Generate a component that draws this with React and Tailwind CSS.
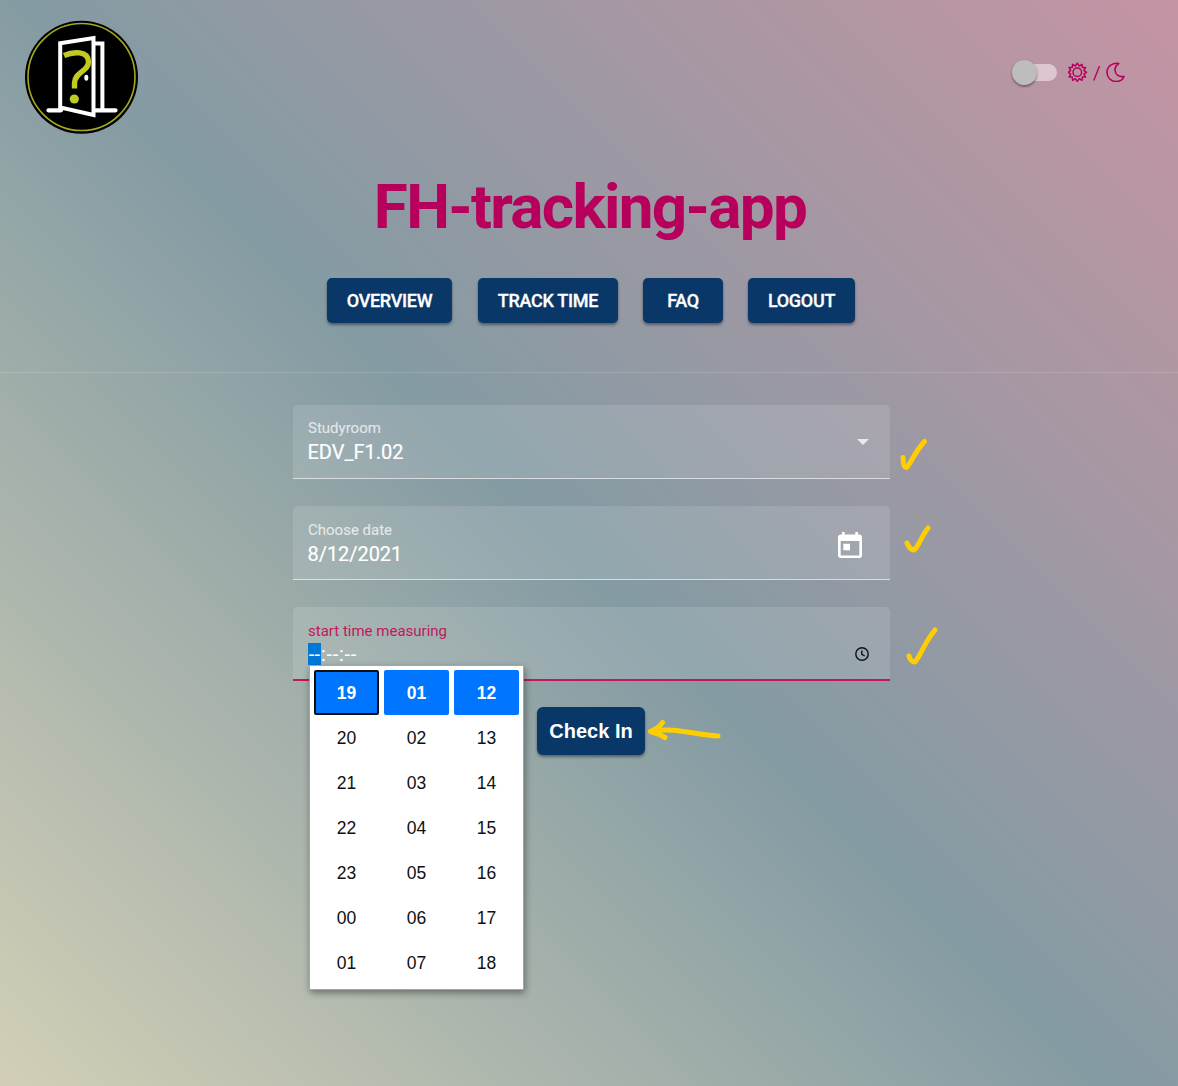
import React from 'react';

const HOURS = ['19', '20', '21', '22', '23', '00', '01'];
const MINUTES = ['01', '02', '03', '04', '05', '06', '07'];
const SECONDS = ['12', '13', '14', '15', '16', '17', '18'];

function Logo() {
  return (
    <svg viewBox="0 0 135 135" className="h-[135px] w-[135px]" fill="none">
      <circle cx="66.5" cy="67.2" r="56.5" fill="#000" />
      <circle cx="66.5" cy="67" r="53.5" stroke="#a3a91e" strokeWidth="1.6" />
      <path d="M33.500 100.3H46M80 100.300H100.500" stroke="#fff" strokeWidth="4.300" strokeLinecap="round" />
      <path d="M80 33.400h7.400V99" stroke="#fff" strokeWidth="4" />
      <path d="M45.200 33.200 78.500 28V105L45.200 97.500Z" stroke="#fff" strokeWidth="4" />
      <path d="M49 45.500C58 41.500 73.500 40.500 73.500 52c0 9.500-14 10-14 21v5.500" stroke="#bfca22" strokeWidth="5.400" />
      <circle cx="59.300" cy="89" r="4.600" fill="#bfca22" />
      <ellipse cx="71.300" cy="67.800" rx="2" ry="3" fill="#fff" />
    </svg>
  );
}

function ThemeSwitch() {
  return (
    <div className="flex h-7 items-center text-[#b6005e]">
      <div className="relative mr-[11px] flex h-[25px] w-[45px] items-center">
        <div className="ml-0.5 h-[17px] w-[43px] rounded-full bg-[#dcc6d0]" />
        <div className="absolute left-0 top-0 size-[25px] rounded-full bg-[#bdbdbd] shadow-[0_2px_2px_rgba(0,0,0,0.25),0_1px_3px_rgba(0,0,0,0.2)]" />
      </div>
      <svg viewBox="0 0 20 20" className="size-5" fill="none" stroke="currentColor" strokeWidth="1.5" strokeLinejoin="round">
        <circle cx="9.300" cy="10.300" r="4.300" />
        <path d="M9.300 1.200 11.200 4 14 2.300 14.300 5.500 17.500 5.600 15.900 8.400 18.500 10.300 15.900 12.200 17.500 15 14.300 15.100 14 18.300 11.200 16.600 9.300 19.400 7.400 16.600 4.600 18.300 4.300 15.100 1.100 15 2.700 12.200.3 10.300 2.700 8.400 1.100 5.600 4.300 5.500 4.600 2.300 7.400 4Z" />
      </svg>
      <svg viewBox="0 0 18 20" className="h-5 w-[18px]" fill="none" stroke="currentColor" strokeWidth="1.400">
        <path d="M5.800 18.500 11.500 4" />
      </svg>
      <svg viewBox="0 0 20 20" className="size-5" fill="none" stroke="currentColor" strokeWidth="1.600" strokeLinejoin="round">
        <path d="M12.800 1.500C7 .3 1 4 1 10.300c0 5.500 4.300 9.200 9 9.200 4 0 6.700-1.900 8-5-5.500.8-9-2.200-9-6.500 0-2.600 1.500-5.100 3.800-6.500Z" />
      </svg>
    </div>
  );
}

function NavButton({ className, children }) {
  return (
    <button className={'h-[45px] rounded-[5px] bg-[#093868] text-[18px] font-medium tracking-[-0.3px] text-white shadow-[0_2px_3px_rgba(0,0,0,0.4)] [-webkit-text-stroke:0.3px_white] ' + className}>
      {children}
    </button>
  );
}

function CheckMark({ className, d, viewBox }) {
  return (
    <svg viewBox={viewBox} className={'absolute ' + className} fill="none" stroke="#ffce00" strokeWidth="5" strokeLinecap="round" strokeLinejoin="round">
      <path d={d} />
    </svg>
  );
}

function TimeColumn({ values, focused }) {
  return (
    <div className="w-[65px]">
      {values.map((v, i) => (
        <div
          key={v}
          className={
            'flex h-[45px] items-center justify-center pt-0.5 text-[17.500px] ' +
            (i === 0 ? 'rounded-[2px] bg-[#0075ff] font-bold text-white ' : 'text-[#101010] ') +
            (i === 0 && focused ? 'border-2 border-[#101010]' : '')
          }
        >
          {v}
        </div>
      ))}
    </div>
  );
}

export default function App() {
  return (
    <div className="h-[1086px] w-full overflow-hidden bg-[linear-gradient(45deg,#d2cfb6_0%,#849ba3_49%,#c594a4_100%)] font-['Roboto',sans-serif]">
      <header className="flex h-[373px] flex-col border-b border-white/15">
        <div className="flex h-[145px] items-start justify-between pl-[15px] pr-[52px] pt-[10px]">
          <Logo />
          <div className="pt-[48px]">
            <ThemeSwitch />
          </div>
        </div>
        <h1 className="ml-[2px] mt-[24px] text-center text-[62px] font-bold leading-[76px] tracking-[-1.680px] text-[#b6005c]">FH-tracking-app</h1>
        <nav className="ml-[327px] mt-[33px] flex">
          <NavButton className="w-[125px]">OVERVIEW</NavButton>
          <NavButton className="ml-[26px] w-[140px]">TRACK TIME</NavButton>
          <NavButton className="ml-[25px] w-[80px]">FAQ</NavButton>
          <NavButton className="ml-[25px] w-[107px]">LOGOUT</NavButton>
        </nav>
      </header>

      <main className="ml-[293px] flex w-[597px] flex-col pt-8">
        <div className="relative h-[74px] rounded-t-[5px] border-b border-white/60 bg-white/12 px-[15px] pt-[14px]">
          <div className="text-[15px] leading-[18px] text-white/70 [-webkit-text-stroke:0.2px_rgba(255,255,255,0.5)]">Studyroom</div>
          <div className="-ml-[0.5px] mt-[3px] text-[20px] leading-6 text-white [-webkit-text-stroke:0.2px_white]">EDV_F1.02</div>
          <div className="absolute left-[564px] top-[34px] border-x-[6.500px] border-t-[6px] border-x-transparent border-t-white/75" />
          <CheckMark className="left-[602px] top-[26px] h-[42px] w-[38px]" viewBox="0 0 38 42" d="M8 26.500C8 32 9 36.500 11.500 36.500C15 34 19 22 29.500 10.500" />
        </div>
        <div className="relative mt-[27px] h-[74px] rounded-t-[5px] border-b border-white/60 bg-white/12 px-[15px] pt-[15px]">
          <div className="text-[15px] leading-[18px] text-white/70 [-webkit-text-stroke:0.2px_rgba(255,255,255,0.5)]">Choose date</div>
          <div className="-ml-[0.5px] mt-[3px] text-[20px] leading-6 tracking-[-0.050px] text-white [-webkit-text-stroke:0.2px_white]">8/12/2021</div>
          <svg viewBox="3 1 18 20" className="absolute left-[545px] top-[26px] h-[26px] w-[24px]" fill="white" preserveAspectRatio="none">
            <path d="M19 3h-1V1h-2v2H8V1H6v2H5c-1.110 0-1.990.9-1.990 2L3 19c0 1.100.89 2 2 2h14c1.100 0 2-.9 2-2V5c0-1.100-.9-2-2-2zm0 16H5V8h14v11zM7 10h5v5H7z" />
          </svg>
          <CheckMark className="left-[606px] top-[14px] h-[42px] w-[38px]" viewBox="0 0 38 42" d="M8 23C10 28 12 30 15 30C19 28 22 17 29 8" />
        </div>
        <div className="relative mt-[27px] h-[74px] rounded-t-[5px] border-b-2 border-[#c2185b] bg-white/12 px-[15px] pt-[15px]">
          <div className="text-[15px] leading-[18px] text-[#c2185b]">start time measuring</div>
          <div className="mt-[3px] flex h-[22px] items-center text-[20px] leading-[22px] text-white">
            <span className="flex h-[22px] w-[13px] items-center justify-center bg-[#0078d7] tracking-[0.200px]">--</span>
            <span className="tracking-[0.700px]">:--:--</span>
          </div>
          <svg viewBox="0 0 14 14" className="absolute left-[562px] top-[40px] size-[14px]" fill="none" stroke="#101010" strokeWidth="1.400">
            <circle cx="7" cy="7" r="6.200" />
            <path d="M6.800 3.500V7.300L9.700 9" />
          </svg>
          <CheckMark className="left-[608px] top-[16px] h-[48px] w-[42px]" viewBox="0 0 42 48" d="M8 33C9 37 11 39 14 39C19 34 23 20 34 7" />
          <div className="absolute left-[16px] top-[58px] z-10 flex h-[325px] w-[215px] gap-[5px] border border-[#a5a5a5] bg-white px-1 pt-1 font-['Liberation_Sans',sans-serif] shadow-[1px_3px_7px_rgba(0,0,0,0.4)]">
            <TimeColumn values={HOURS} focused />
            <TimeColumn values={MINUTES} />
            <TimeColumn values={SECONDS} />
          </div>
        </div>
        <div className="ml-[244px] mt-[26px] flex">
          <button className="h-[48px] w-[108px] rounded-[6px] bg-[#093868] font-['Liberation_Sans',sans-serif] text-[20px] font-bold text-white shadow-[0_2px_3px_rgba(0,0,0,0.4)]">Check In</button>
          <svg viewBox="0 0 76 28" className="mt-[7px] h-[28px] w-[76px]" fill="none" stroke="#ffce00" strokeWidth="5" strokeLinecap="round" strokeLinejoin="round">
            <path d="M17.500 8.500C15 13 11 15 5.500 17.500C11 19 15 20.500 20 23.500M7 17.500C28 13 49 20.500 73 22" />
          </svg>
        </div>
      </main>
    </div>
  );
}
